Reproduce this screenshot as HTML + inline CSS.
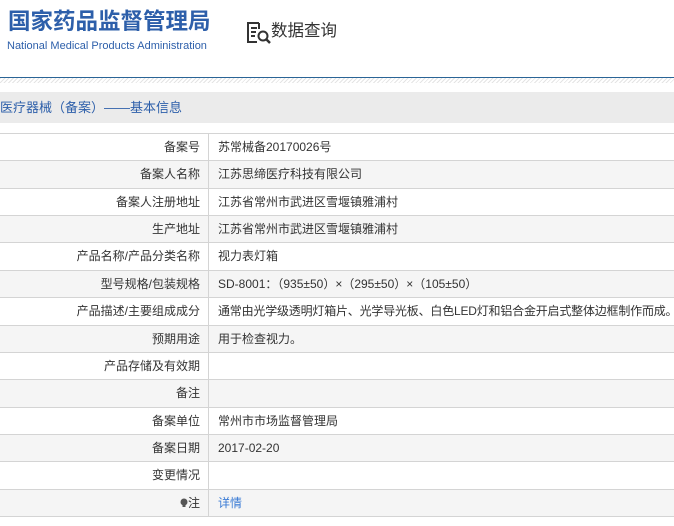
<!DOCTYPE html><html><head><meta charset="utf-8"><style>
body{margin:0;width:674px;height:526px;overflow:hidden;background:#fff;font-family:"Liberation Sans","Noto Sans CJK SC",sans-serif;position:relative}
.t1{position:absolute;left:8px;top:8px;font-size:22.5px;line-height:28px;font-weight:bold;color:#2d5faa;white-space:nowrap}
.t2{position:absolute;left:7px;top:39px;font-size:11px;line-height:14px;color:#2d5faa;white-space:nowrap}
.q{position:absolute;left:271px;top:19px;font-size:16.5px;line-height:24px;color:#333}
.line{position:absolute;left:0;top:77px;width:674px;height:1px;background:#2a6496}
.hatch{position:absolute;left:0;top:78px;width:674px;height:5px;background:repeating-linear-gradient(135deg,#e4e4e4 0 1px,#fff 1px 3px)}
.band{position:absolute;left:0;top:92px;width:674px;height:31px;background:#ebebeb;color:#2d5faa;font-size:13px;line-height:31px}
.tbl{position:absolute;left:0;top:133px;width:674px;border-top:1px solid #d4d4d4}
.r{height:27.36px;box-sizing:border-box;border-bottom:1px solid #d4d4d4;display:flex;font-size:12px;color:#333;line-height:26px;overflow:hidden}
.r:nth-child(even){background:#f5f5f5}
.l{width:209px;flex:0 0 209px;box-sizing:border-box;border-right:1px solid #d4d4d4;text-align:right;padding-right:8px;white-space:nowrap}
.v{padding-left:9px;white-space:nowrap}
</style></head><body>
<div class="t1">国家药品监督管理局</div>
<div class="t2">National Medical Products Administration</div>
<svg style="position:absolute;left:246px;top:20px" width="26" height="26" viewBox="0 0 26 26"><path d="M13 3H2v19h9" fill="none" stroke="#333" stroke-width="2"/><path d="M13 3v6M5 8h6M5 12h5M5 16h4" stroke="#333" stroke-width="2" fill="none"/><circle cx="17" cy="16" r="4.5" fill="none" stroke="#333" stroke-width="2"/><path d="M20 19l4 4" stroke="#333" stroke-width="2.5"/></svg>
<div class="q">数据查询</div>
<div class="line"></div><div class="hatch"></div>
<div class="band">医疗器械（备案）——基本信息</div>
<div class="tbl">
<div class="r"><div class="l">备案号</div><div class="v">苏常械备20170026号</div></div>
<div class="r"><div class="l">备案人名称</div><div class="v">江苏思缔医疗科技有限公司</div></div>
<div class="r"><div class="l">备案人注册地址</div><div class="v">江苏省常州市武进区雪堰镇雅浦村</div></div>
<div class="r"><div class="l">生产地址</div><div class="v">江苏省常州市武进区雪堰镇雅浦村</div></div>
<div class="r"><div class="l">产品名称/产品分类名称</div><div class="v">视力表灯箱</div></div>
<div class="r"><div class="l">型号规格/包装规格</div><div class="v">SD-8001：（935±50）×（295±50）×（105±50）</div></div>
<div class="r"><div class="l">产品描述/主要组成成分</div><div class="v" style="letter-spacing:-0.2px">通常由光学级透明灯箱片、光学导光板、白色LED灯和铝合金开启式整体边框制作而成。</div></div>
<div class="r"><div class="l">预期用途</div><div class="v">用于检查视力。</div></div>
<div class="r"><div class="l">产品存储及有效期</div><div class="v"></div></div>
<div class="r"><div class="l">备注</div><div class="v"></div></div>
<div class="r"><div class="l">备案单位</div><div class="v">常州市市场监督管理局</div></div>
<div class="r"><div class="l">备案日期</div><div class="v">2017-02-20</div></div>
<div class="r"><div class="l">变更情况</div><div class="v"></div></div>
<div class="r"><div class="l"><svg width="8" height="10" viewBox="0 0 8 10" style="vertical-align:-1px"><circle cx="4" cy="4" r="3.5" fill="#555"/><path d="M2.5 7h3v2h-3z" fill="#555"/></svg>注</div><div class="v" style="color:#3a7bd5">详情</div></div>
</div>
</body></html>
